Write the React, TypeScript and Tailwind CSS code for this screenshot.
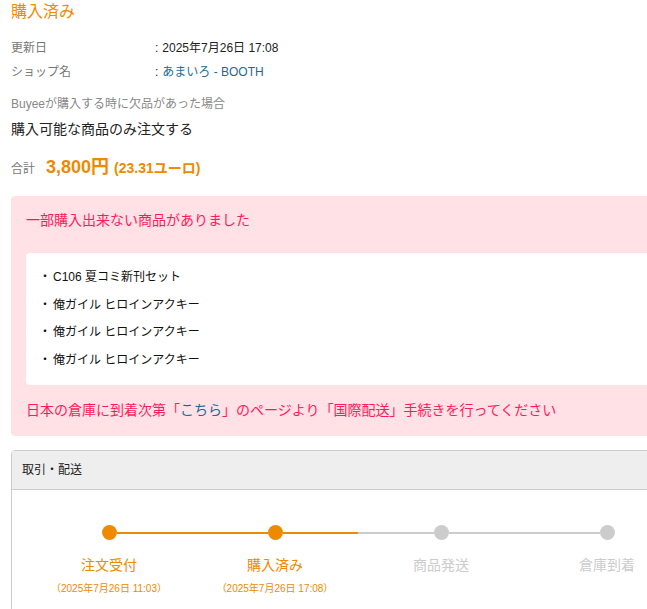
const font = { fontFamily: '"Liberation Sans", "Noto Sans CJK JP", sans-serif' };

const items = ['C106 夏コミ新刊セット', '俺ガイル ヒロインアクキー', '俺ガイル ヒロインアクキー', '俺ガイル ヒロインアクキー'];

const steps = [
  { label: '注文受付', date: '（2025年7月26日 11:03）', done: true, left: 'none', right: 'on' },
  { label: '購入済み', date: '（2025年7月26日 17:08）', done: true, left: 'on', right: 'on' },
  { label: '商品発送', date: '', done: false, left: 'off', right: 'off' },
  { label: '倉庫到着', date: '', done: false, left: 'off', right: 'none' },
];

function Half({ kind }: { kind: string }) {
  if (kind === 'none') return <div className="flex-1" />;
  return <div className={kind === 'on' ? 'flex-1 h-[2px] bg-[#ee8a00]' : 'flex-1 h-[2px] bg-[#cccccc]'} />;
}

export default function App() {
  return (
    <div className="w-[647px] h-[609px] overflow-hidden bg-white" style={font}>
      <div className="w-[716px] px-[11px] pt-[1px]">
        {/* Status */}
        <h2 className="text-[16px] leading-[22px] text-[#f08a00]">購入済み</h2>

        <dl className="mt-[13px] text-[12px] leading-[24px]">
          <div className="flex">
            <dt className="w-[144px] text-[#777777]">更新日</dt>
            <dd className="text-[#222222]"><span className="mr-[4px]">:</span>2025年7月26日 17:08</dd>
          </div>
          <div className="flex">
            <dt className="w-[144px] text-[#777777]">ショップ名</dt>
            <dd className="text-[#222222]"><span className="mr-[4px]">:</span><span className="text-[#1b6a97]">あまいろ - BOOTH</span></dd>
          </div>
        </dl>

        <p className="mt-[12px] text-[12px] leading-[16px] text-[#888888]">Buyeeが購入する時に欠品があった場合</p>
        <p className="mt-[8px] text-[14px] leading-[18px] text-[#222222]">購入可能な商品のみ注文する</p>

        <div className="mt-[16px] flex items-baseline gap-[11px]">
          <span className="text-[12px] text-[#777777]">合計</span>
          <span className="text-[18px] font-bold text-[#ee8a00]">
            3,800円 <span className="text-[14px]">(23.31ユーロ)</span>
          </span>
        </div>

        {/* Notice */}
        <div className="mt-[15px] rounded-[4px] bg-[#ffe1e6] px-[15px] pt-[14px] pb-[16px]">
          <p className="text-[14px] leading-[20px] text-[#ff1a5c]">一部購入出来ない商品がありました</p>
          <ul className="mt-[23px] rounded-[4px] bg-white px-[13px] py-[11px] text-[12px] leading-[27.5px] text-[#111111]">
            {items.map((item, i) => (
              <li key={i}>
                ・<span className="ml-[2px]">{item}</span>
              </li>
            ))}
          </ul>
          <p className="mt-[15px] text-[14px] leading-[20px] text-[#ff1a5c]">
            日本の倉庫に到着次第「<span className="text-[#1b6a97]">こちら</span>」のページより「国際配送」手続きを行ってください
          </p>
        </div>

        {/* Shipping */}
        <div className="mt-[14px] rounded-t-[4px] border border-[#cccccc]">
          <div className="h-[39px] flex items-center px-[10px] bg-[#eeeeee] border-b border-[#cccccc] text-[12px] text-[#222222]">
            取引・配送
          </div>
          <div className="px-[14px] pt-[35px] pb-[20px] flex">
            {steps.map((s, i) => (
              <div key={i} className="w-[166px] flex flex-col items-center">
                <div className="w-full flex items-center">
                  <Half kind={s.left} />
                  <div className={s.done ? 'w-[15px] h-[15px] rounded-full bg-[#ee8a00]' : 'w-[15px] h-[15px] rounded-full bg-[#cccccc]'} />
                  <Half kind={s.right} />
                </div>
                <div className={s.done ? 'mt-[15px] text-[14px] leading-[20px] text-[#ee8a00]' : 'mt-[15px] text-[14px] leading-[20px] text-[#cccccc]'}>
                  {s.label}
                </div>
                {s.date && <div className="mt-[8px] text-[10px] leading-[12px] text-[#ee8a00]">{s.date}</div>}
              </div>
            ))}
          </div>
        </div>
      </div>
    </div>
  );
}
